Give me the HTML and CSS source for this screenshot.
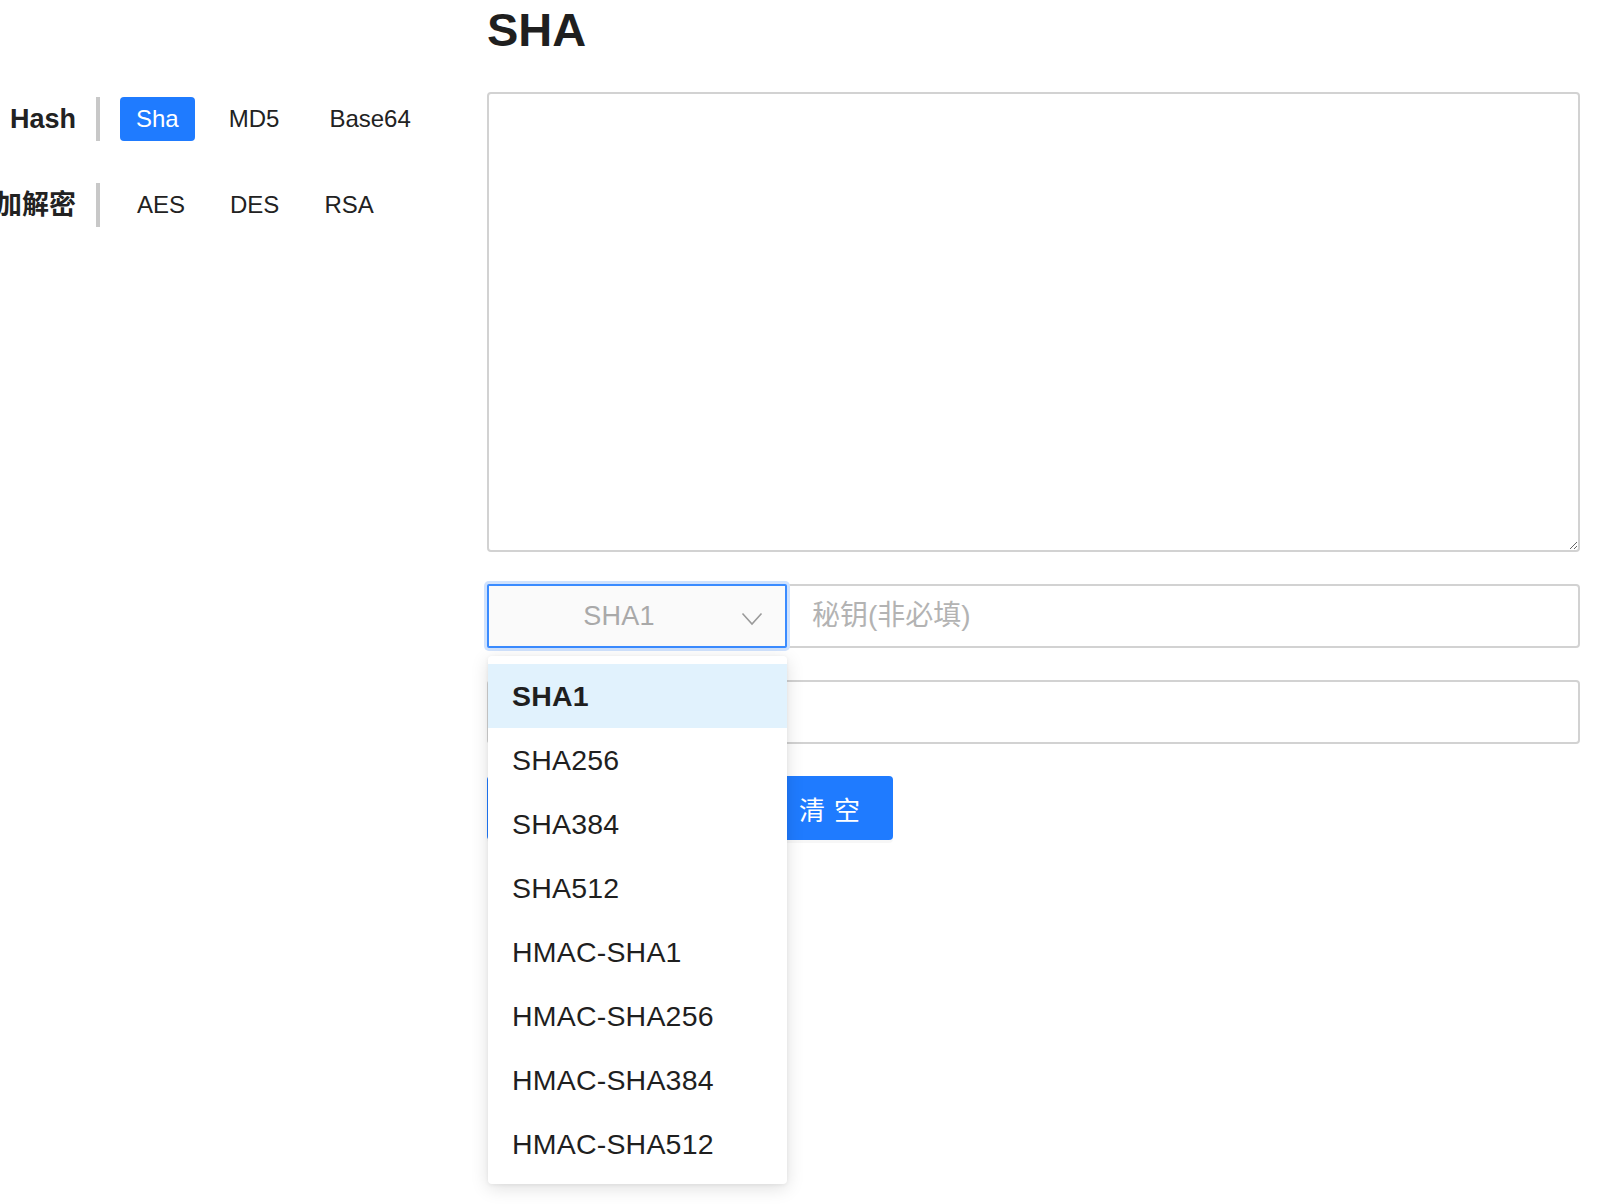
FILE: index.html
```html
<!DOCTYPE html>
<html lang="zh-CN">
<head>
<meta charset="utf-8">
<title>SHA</title>
<link rel="stylesheet" href="styles.css">
</head>
<body>
<div class="page">
  <aside class="nav">
    <div class="nav-row">
      <div class="nav-label"><span>Hash</span></div>
      <div class="nav-divider"></div>
      <div class="nav-items">
        <a class="nav-item active">Sha</a>
        <a class="nav-item">MD5</a>
        <a class="nav-item">Base64</a>
      </div>
    </div>
    <div class="nav-row">
      <div class="nav-label"><span>加解密</span></div>
      <div class="nav-divider"></div>
      <div class="nav-items nav-items-tight">
        <a class="nav-item">AES</a>
        <a class="nav-item">DES</a>
        <a class="nav-item">RSA</a>
      </div>
    </div>
  </aside>
  <main class="main">
    <h1 class="title">SHA</h1>
    <textarea class="source"></textarea>
    <div class="input-group">
      <div class="select-wrap">
        <div class="select">
          <span class="select-value">SHA1</span>
          <svg class="select-arrow" width="22" height="14" viewBox="0 0 22 14"><polyline points="1.5,1.5 11,12 20.5,1.5" fill="none" stroke="#9a9a9a" stroke-width="1.6"/></svg>
        </div>
        <ul class="dropdown">
          <li class="option selected">SHA1</li>
          <li class="option">SHA256</li>
          <li class="option">SHA384</li>
          <li class="option">SHA512</li>
          <li class="option">HMAC-SHA1</li>
          <li class="option">HMAC-SHA256</li>
          <li class="option">HMAC-SHA384</li>
          <li class="option">HMAC-SHA512</li>
        </ul>
      </div>
      <input class="secret" type="text" placeholder="秘钥(非必填)">
    </div>
    <input class="result" type="text">
    <div class="actions">
      <button class="btn btn-main" aria-label="加密"></button>
      <button class="btn btn-clear"><span class="cjk2">清空</span></button>
    </div>
  </main>
</div>
</body>
</html>
```

FILE: styles.css
```css
html, body {
  margin: 0;
  padding: 0;
  background: #ffffff;
}

body {
  font-family: "Liberation Sans", "Noto Sans CJK SC", sans-serif;
  color: #222222;
  overflow: hidden;
}

.page {
  display: flex;
  width: 1604px;
  min-height: 1204px;
}

/* left navigation */
.nav {
  width: 487px;
  flex: none;
  padding-top: 97px;
  box-sizing: border-box;
}

.nav-row {
  display: flex;
  align-items: center;
  height: 44px;
  margin-bottom: 42px;
}

.nav-label {
  width: 76px;
  display: flex;
  justify-content: flex-end;
  font-size: 27px;
  font-weight: bold;
  line-height: 44px;
  white-space: nowrap;
  color: #222222;
}

.nav-divider {
  width: 4px;
  height: 44px;
  margin-left: 20px;
  background: #c8c8c8;
}

.nav-items {
  display: flex;
  gap: 18px;
  margin-left: 20px;
}

.nav-items-tight {
  gap: 13px;
  margin-left: 21px;
}

.nav-item {
  display: block;
  height: 44px;
  line-height: 44px;
  padding: 0 16px;
  font-size: 24px;
  color: #222222;
  border-radius: 4px;
  cursor: pointer;
}

.nav-item.active {
  background: #1f7bff;
  color: #ffffff;
}

/* main area */
.main {
  flex: 1;
  padding-right: 24px;
  min-width: 0;
}

.title {
  margin: 2px 0 34px;
  font-size: 47px;
  line-height: 56px;
  font-weight: bold;
  color: #1f1f1f;
}

.source {
  display: block;
  width: 100%;
  height: 460px;
  box-sizing: border-box;
  border: 2px solid #d2d2d2;
  border-radius: 4px;
  resize: vertical;
  font-family: inherit;
  font-size: 24px;
  outline: none;
}

.input-group {
  display: flex;
  margin-top: 32px;
  height: 64px;
}

.select-wrap {
  position: relative;
  width: 300px;
  flex: none;
  z-index: 2;
}

.select {
  height: 64px;
  box-sizing: border-box;
  border: 2px solid #3a8bff;
  border-radius: 2px;
  background: #fafafa;
  box-shadow: 0 0 0 3px #d0e2fd;
  display: flex;
  align-items: center;
  justify-content: center;
  padding-right: 36px;
  position: relative;
}

.select-value {
  font-size: 27px;
  color: #a9a9a9;
  line-height: 60px;
  letter-spacing: 0.3px;
}

.select-arrow {
  position: absolute;
  right: 22px;
  top: 26px;
}

.secret {
  flex: 1;
  min-width: 0;
  height: 64px;
  box-sizing: border-box;
  margin-left: 1px;
  border: 2px solid #d2d2d2;
  border-radius: 0 4px 4px 0;
  padding: 0 22px;
  font-family: inherit;
  font-size: 28px;
  color: #222222;
  outline: none;
}

.secret::placeholder {
  color: #b3b3b3;
}

.result {
  display: block;
  width: 100%;
  height: 64px;
  margin-top: 32px;
  box-sizing: border-box;
  border: 2px solid #d2d2d2;
  border-radius: 4px;
  padding: 0 22px;
  font-family: inherit;
  font-size: 28px;
  outline: none;
}

.actions {
  display: flex;
  gap: 16px;
  margin-top: 32px;
}

.btn {
  height: 64px;
  border: none;
  border-radius: 4px;
  background: #1f7bff;
  color: #ffffff;
  font-family: inherit;
  font-size: 26px;
  padding: 0;
  cursor: pointer;
  box-shadow: 0 3px 0 rgba(0, 0, 0, 0.03);
}

.btn-main {
  width: 263px;
}

.btn-clear {
  width: 127px;
}

.cjk2 {
  letter-spacing: 0.34em;
  margin-right: -0.34em;
}

/* dropdown overlay */
.dropdown {
  position: absolute;
  top: 72px;
  left: 1px;
  width: 299px;
  margin: 0;
  padding: 8px 0;
  list-style: none;
  background: #ffffff;
  border-radius: 4px;
  box-shadow: 0 4px 18px rgba(0, 0, 0, 0.13), 0 1px 4px rgba(0, 0, 0, 0.06);
  z-index: 10;
}

.option {
  height: 64px;
  line-height: 64px;
  padding-left: 24px;
  font-size: 28.5px;
  color: #1f1f1f;
  white-space: nowrap;
  letter-spacing: 0.2px;
}

.option.selected {
  background: #e1f2fd;
  font-weight: bold;
}
```
